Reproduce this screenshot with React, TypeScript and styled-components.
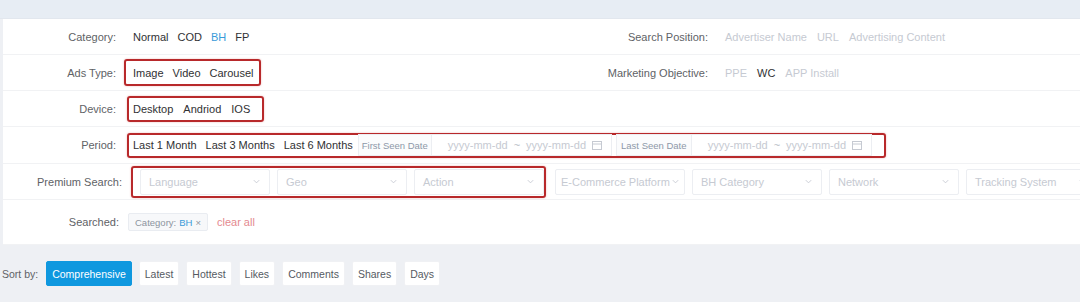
import React from "react";
import styled, { createGlobalStyle } from "styled-components";

const Global = createGlobalStyle`
  html, body { margin: 0; padding: 0; background: #eef0f4; }
  body { font-family: "Liberation Sans", Arial, sans-serif; font-size: 11px; color: #303133; }
`;

const Page = styled.div`
  width: 1080px;
  height: 302px;
  overflow: hidden;
  background: #eef0f4;
`;

const TopStrip = styled.div`
  height: 18px;
  background: #e7edf4;
  border-bottom: 1px solid #e2e7ee;
`;

const Panel = styled.div`
  margin-left: 3px;
  background: #fff;
`;

const Row = styled.div<{ $h?: number }>`
  display: flex;
  align-items: center;
  height: ${(p) => p.$h ?? 36}px;
  border-bottom: 1px solid #f1f2f4;
  box-sizing: border-box;
`;

const Half = styled.div<{ $w?: number }>`
  display: flex;
  align-items: center;
  ${(p) => (p.$w ? `width: ${p.$w}px;` : "flex: 1;")}
`;

const Label = styled.div<{ $w: number; $gap: number }>`
  width: ${(p) => p.$w}px;
  margin-right: ${(p) => p.$gap}px;
  text-align: right;
  color: #606266;
  white-space: nowrap;
  flex-shrink: 0;
`;

const Options = styled.div<{ $gap?: number }>`
  display: flex;
  align-items: center;
  gap: ${(p) => p.$gap ?? 9}px;
  white-space: nowrap;
`;

const Opt = styled.span<{ $tone?: "active" | "muted" | "normal" }>`
  line-height: 18px;
  color: ${(p) =>
    p.$tone === "active" ? "#3a9bd9" : p.$tone === "muted" ? "#c6cad2" : "#303133"};
`;

const Highlight = styled.div<{ $l: number; $r: number; $h: number }>`
  display: flex;
  align-items: center;
  box-sizing: border-box;
  height: ${(p) => p.$h}px;
  border: 2px solid #b8292b;
  border-radius: 3px;
  box-shadow: 0 0 2px rgba(200, 40, 40, 0.35);
  padding: 0 ${(p) => p.$r}px 0 ${(p) => p.$l}px;
  margin-left: -${(p) => p.$l + 2}px;
  margin-right: -${(p) => p.$r + 2}px;
`;

const DateGroup = styled.div`
  display: flex;
  align-items: center;
  margin-left: 5px;
  gap: 4px;
`;

const DateField = styled.div`
  display: flex;
  align-items: stretch;
  height: 22px;
`;

const Prefix = styled.div<{ $w: number }>`
  width: ${(p) => p.$w}px;
  box-sizing: border-box;
  display: flex;
  align-items: center;
  justify-content: center;
  font-size: 9.5px;
  color: #8d98a8;
  border: 1px solid #eceef2;
  background: #fbfcfd;
  white-space: nowrap;
`;

const Range = styled.div`
  width: 180px;
  box-sizing: border-box;
  display: flex;
  align-items: center;
  padding-left: 16px;
  border: 1px solid #eceef2;
  border-left: none;
  color: #c6cad2;
  gap: 6px;
`;

const Tilde = styled.span`
  color: #b7bcc5;
`;

const Selects = styled.div<{ $offset?: number }>`
  display: flex;
  align-items: center;
  gap: 7px;
  margin-left: ${(p) => p.$offset ?? 0}px;
`;

const Select = styled.div<{ $tight?: boolean }>`
  width: 130px;
  height: 26px;
  box-sizing: border-box;
  flex-shrink: 0;
  display: flex;
  align-items: center;
  justify-content: space-between;
  padding: ${(p) => (p.$tight ? "0 4px 0 5px" : "0 8px")};
  border: 1px solid #eceef2;
  border-radius: 2px;
  color: #c6cad2;
  white-space: nowrap;
  overflow: hidden;
`;

const Tag = styled.span`
  display: inline-flex;
  align-items: center;
  gap: 3px;
  height: 18px;
  box-sizing: border-box;
  padding: 0 6px;
  border: 1px solid #e9ecf1;
  background: #f7f8fa;
  border-radius: 2px;
  font-size: 9.5px;
  color: #8d949e;
`;

const TagValue = styled.span`
  color: #3a9bd9;
`;

const ClearAll = styled.span`
  margin-left: 9px;
  color: #e48a90;
`;

const SortBar = styled.div`
  display: flex;
  align-items: center;
  gap: 7px;
  margin-top: 16px;
  padding-left: 2px;
`;

const SortLabel = styled.span`
  color: #606266;
  font-size: 10.5px;
  margin-right: 1px;
`;

const SortBtn = styled.span<{ $active?: boolean }>`
  display: inline-flex;
  align-items: center;
  height: 23px;
  padding: 0 5px;
  font-size: 10.5px;
  border-radius: 2px;
  background: ${(p) => (p.$active ? "#0f98df" : "#fff")};
  color: ${(p) => (p.$active ? "#fff" : "#555a62")};
  border: 1px solid ${(p) => (p.$active ? "#0f98df" : "#f0f1f4")};
`;

const Chevron = () => (
  <svg width="9" height="9" viewBox="0 0 10 10" style={{ flexShrink: 0 }}>
    <path d="M2 3.5 L5 6.5 L8 3.5" fill="none" stroke="#c6cad2" strokeWidth="1" />
  </svg>
);

const Calendar = () => (
  <svg width="10" height="10" viewBox="0 0 10 10">
    <rect x="0.5" y="1.5" width="9" height="8" fill="none" stroke="#c6cad2" strokeWidth="1" />
    <line x1="0.5" y1="4" x2="9.5" y2="4" stroke="#c6cad2" strokeWidth="1" />
  </svg>
);

const DateRange = ({ label, w }: { label: string; w: number }) => (
  <DateField>
    <Prefix $w={w}>{label}</Prefix>
    <Range>
      <span>yyyy-mm-dd</span>
      <Tilde>~</Tilde>
      <span>yyyy-mm-dd</span>
      <Calendar />
    </Range>
  </DateField>
);

const selects = [
  "Language",
  "Geo",
  "Action",
  "E-Commerce Platform",
  "BH Category",
  "Network",
  "Tracking System",
];

const SelectBox = ({ name }: { name: string }) => (
  <Select $tight={name.length > 16}>
    <span>{name}</span>
    <Chevron />
  </Select>
);

export default function App() {
  return (
    <Page>
      <Global />
      <TopStrip />
      <Panel>
        <Row>
          <Half $w={540}>
            <Label $w={113} $gap={17}>Category:</Label>
            <Options>
              <Opt>Normal</Opt>
              <Opt>COD</Opt>
              <Opt $tone="active">BH</Opt>
              <Opt>FP</Opt>
            </Options>
          </Half>
          <Half>
            <Label $w={165} $gap={17}>Search Position:</Label>
            <Options $gap={10}>
              <Opt $tone="muted">Advertiser Name</Opt>
              <Opt $tone="muted">URL</Opt>
              <Opt $tone="muted">Advertising Content</Opt>
            </Options>
          </Half>
        </Row>
        <Row>
          <Half $w={540}>
            <Label $w={113} $gap={17}>Ads Type:</Label>
            <Highlight $l={7} $r={5} $h={27}>
              <Options>
                <Opt>Image</Opt>
                <Opt>Video</Opt>
                <Opt>Carousel</Opt>
              </Options>
            </Highlight>
          </Half>
          <Half>
            <Label $w={165} $gap={17}>Marketing Objective:</Label>
            <Options $gap={10}>
              <Opt $tone="muted">PPE</Opt>
              <Opt>WC</Opt>
              <Opt $tone="muted">APP Install</Opt>
            </Options>
          </Half>
        </Row>
        <Row>
          <Label $w={113} $gap={17}>Device:</Label>
          <Highlight $l={4} $r={12} $h={26}>
            <Options $gap={10}>
              <Opt>Desktop</Opt>
              <Opt>Andriod</Opt>
              <Opt>IOS</Opt>
            </Options>
          </Highlight>
        </Row>
        <Row $h={37}>
          <Label $w={113} $gap={17}>Period:</Label>
          <Highlight $l={4} $r={12} $h={25}>
            <Options>
              <Opt>Last 1 Month</Opt>
              <Opt>Last 3 Months</Opt>
              <Opt>Last 6 Months</Opt>
            </Options>
            <DateGroup>
              <DateRange label="First Seen Date" w={74} />
              <DateRange label="Last Seen Date" w={76} />
            </DateGroup>
          </Highlight>
        </Row>
        <Row>
          <Label $w={119} $gap={18}>Premium Search:</Label>
          <Highlight $l={7} $r={0} $h={32}>
            <Selects>
              {selects.slice(0, 3).map((s) => (
                <SelectBox key={s} name={s} />
              ))}
            </Selects>
          </Highlight>
          <Selects $offset={11}>
            {selects.slice(3).map((s) => (
              <SelectBox key={s} name={s} />
            ))}
          </Selects>
        </Row>
        <Row $h={45}>
          <Label $w={116} $gap={9}>Searched:</Label>
          <Tag>
            Category: <TagValue>BH</TagValue> ×
          </Tag>
          <ClearAll>clear all</ClearAll>
        </Row>
      </Panel>
      <SortBar>
        <SortLabel>Sort by:</SortLabel>
        <SortBtn $active>Comprehensive</SortBtn>
        <SortBtn>Latest</SortBtn>
        <SortBtn>Hottest</SortBtn>
        <SortBtn>Likes</SortBtn>
        <SortBtn>Comments</SortBtn>
        <SortBtn>Shares</SortBtn>
        <SortBtn>Days</SortBtn>
      </SortBar>
    </Page>
  );
}
